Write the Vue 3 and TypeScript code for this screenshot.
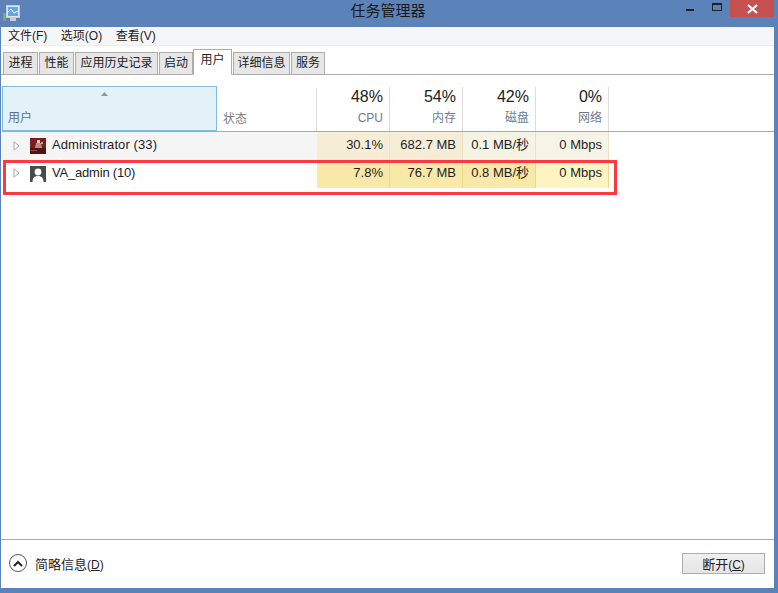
<script setup lang="ts">
const menus = ['文件(F)', '选项(O)', '查看(V)']
const tabs = [
  { label: '进程', w: 35 },
  { label: '性能', w: 35 },
  { label: '应用历史记录', w: 83 },
  { label: '启动', w: 34 },
  { label: '用户', w: 39, active: true },
  { label: '详细信息', w: 57 },
  { label: '服务', w: 34 }
]
const heads = [
  { pct: '48%', name: 'CPU' },
  { pct: '54%', name: '内存' },
  { pct: '42%', name: '磁盘' },
  { pct: '0%', name: '网络' }
]
const rows = [
  {
    name: 'Administrator (33)',
    kind: 'admin',
    cells: [
      { v: '30.1%', c: '#f6edd6' },
      { v: '682.7 MB', c: '#f6edd6' },
      { v: '0.1 MB/秒', c: '#f5f3e4' },
      { v: '0 Mbps', c: '#f6f4e6' }
    ]
  },
  {
    name: 'VA_admin (10)',
    kind: 'user',
    cells: [
      { v: '7.8%', c: '#f9e9a8' },
      { v: '76.7 MB', c: '#f9e9a8' },
      { v: '0.8 MB/秒', c: '#f9e9a8' },
      { v: '0 Mbps', c: '#fdf3c3' }
    ]
  }
]
</script>

<template>
  <div class="window">
    <header class="titlebar">
      <svg class="appicon" width="17" height="17" viewBox="0 0 17 17">
        <rect x="0" y="8" width="3" height="8" fill="#8a9a8c" />
        <rect x="1" y="10" width="1" height="2" fill="#6fbf5a" />
        <rect x="3.500" y="0.500" width="13" height="12" fill="#dfe4ea" stroke="#c3ccd4" />
        <rect x="5" y="2" width="10" height="9" fill="#5fa7e8" />
        <path d="M5 7l3-3 3 4 4-2" fill="none" stroke="#fff" stroke-width="1" />
        <rect x="7" y="13" width="6" height="3" fill="#c8ccd0" />
      </svg>
      <span class="title">任务管理器</span>
      <div class="controls">
        <span class="min"></span>
        <span class="max"></span>
        <span class="close">
          <svg width="13" height="10" viewBox="0 0 13 10"><path d="M2 1l9 8M11 1l-9 8" stroke="#fff" stroke-width="2.2" fill="none" /></svg>
        </span>
      </div>
    </header>

    <main class="client">
      <nav class="menubar">
        <span v-for="m in menus" :key="m" class="menu">{{ m }}</span>
      </nav>

      <div class="tabs">
        <span
          v-for="t in tabs"
          :key="t.label"
          class="tab"
          :class="{ active: t.active }"
          :style="{ width: t.w + 'px' }"
        >{{ t.label }}</span>
      </div>

      <section class="table">
        <div class="thead">
          <div class="th-user">
            <svg class="sort" width="7" height="4" viewBox="0 0 7 4"><path d="M3.500 0L7 4H0z" fill="#7f9db5" /></svg>
            <span>用户</span>
          </div>
          <div class="th-status">状态</div>
          <div v-for="h in heads" :key="h.name" class="th-num">
            <span class="pct">{{ h.pct }}</span>
            <span class="cname">{{ h.name }}</span>
          </div>
        </div>

        <div class="tbody">
          <div v-for="r in rows" :key="r.name" class="row" :class="r.kind">
            <div class="namecell">
              <svg class="arrow" width="7" height="10" viewBox="0 0 7 10"><path d="M1 .8L6 5 1 9.2z" fill="#fff" stroke="#a6a6a6" /></svg>
              <svg v-if="r.kind === 'admin'" class="avatar" width="16" height="16" viewBox="0 0 16 16">
                <rect width="16" height="16" fill="#7a1f1c" />
                <rect y="10" width="16" height="6" fill="#521412" />
                <path d="M6 5h5l1 5H5z" fill="#b98c86" />
                <rect x="7" y="2" width="3" height="3" fill="#e2c8c0" />
                <rect x="11" y="4" width="2" height="2" fill="#c9a09a" />
                <rect x="1" y="12" width="6" height="1" fill="#a04a40" />
              </svg>
              <svg v-else class="avatar" width="16" height="16" viewBox="0 0 16 16">
                <rect width="16" height="16" fill="#4a4a4a" />
                <circle cx="8" cy="6" r="3.400" fill="#fff" />
                <path d="M2.500 16c0-4 2-6 5.500-6s5.500 2 5.500 6z" fill="#fff" />
              </svg>
              <span class="uname">{{ r.name }}</span>
            </div>
            <div class="statuscell"></div>
            <div
              v-for="c in r.cells"
              :key="c.v"
              class="numcell"
              :style="{ background: c.c }"
            >{{ c.v }}</div>
          </div>
          <div class="highlight"></div>
        </div>
      </section>

      <footer class="footer">
        <div class="fewer">
          <span class="chev">
            <svg width="10" height="7" viewBox="0 0 10 7"><path d="M1 6l4-4 4 4" fill="none" stroke="#222" stroke-width="2" /></svg>
          </span>
          <span class="fewer-text">简略信息<span class="key">(<u>D</u>)</span></span>
        </div>
        <button class="end" type="button">断开<span class="key">(<u>C</u>)</span></button>
      </footer>
    </main>
  </div>
</template>

<style>
html, body { margin: 0; padding: 0; background: #5b82b9; }
</style>

<style scoped>
.window {
  width: 778px;
  height: 593px;
  background: #5b82b9;
  display: flex;
  flex-direction: column;
  font-family: "Liberation Sans", "Noto Sans CJK SC", sans-serif;
  font-size: 12px;
  color: #1e1e1e;
  overflow: hidden;
}
.titlebar {
  height: 27px;
  flex: none;
  display: flex;
  align-items: flex-start;
  position: relative;
}
.appicon { margin: 5px 0 0 3px; }
.title {
  position: absolute;
  left: -2px;
  right: 0;
  top: 1px;
  text-align: center;
  font-size: 15px;
  line-height: 20px;
  color: #1a1a1a;
}
.controls {
  margin-left: auto;
  display: flex;
  align-items: flex-start;
  position: relative;
  z-index: 1;
}
.min {
  width: 8px;
  height: 2px;
  background: #222;
  margin: 9px 18px 0 0;
}
.max {
  width: 8px;
  height: 5px;
  border: 1px solid #222;
  border-top-width: 2px;
  margin: 3px 8px 0 0;
}
.close {
  width: 44px;
  height: 17px;
  background: #c75050;
  margin-right: 4px;
  display: flex;
  align-items: center;
  justify-content: center;
}
.client {
  flex: none;
  width: 773px;
  height: 561px;
  margin-left: 1px;
  background: #fff;
  display: flex;
  flex-direction: column;
}
.menubar {
  height: 18px;
  flex: none;
  background: #f5f6f7;
  border-bottom: 1px solid #ececec;
  display: flex;
  align-items: center;
  padding-left: 7px;
  gap: 13.5px;
  line-height: 18px;
}
.tabs {
  height: 29px;
  flex: none;
  display: flex;
  align-items: flex-end;
  padding-left: 2px;
  gap: 1px;
  border-bottom: 1px solid #acacac;
  box-sizing: border-box;
}
.tab {
  box-sizing: border-box;
  height: 23px;
  margin-bottom: -1px;
  background: #e6e6e6;
  border: 1px solid #acacac;
  text-align: center;
  line-height: 20px;
  color: #222;
}
.tab.active {
  height: 26px;
  background: #fff;
  border-bottom-color: #fff;
  line-height: 21px;
  margin-left: -1px;
  position: relative;
}
.table {
  flex: 1;
  display: flex;
  flex-direction: column;
  padding-top: 11px;
}
.thead {
  display: flex;
  height: 46px;
  flex: none;
  border-bottom: 1px solid #a9a9a9;
  box-sizing: border-box;
  margin-left: 1px;
}
.th-user {
  box-sizing: border-box;
  width: 215px;
  background: #e3f2f9;
  border: 1px solid #7dbde6;
  position: relative;
  padding: 0 0 5px 5px;
  display: flex;
  align-items: flex-end;
  color: #5f6f7b;
  height: 45px;
}
.sort {
  position: absolute;
  left: 98px;
  top: 5px;
}
.th-status {
  box-sizing: border-box;
  width: 100px;
  padding: 0 0 5px 6px;
  margin-top: 2px;
  display: flex;
  align-items: flex-end;
  color: #7a7a7a;
  border-right: 1px solid #dcdcdc;
}
.th-num {
  box-sizing: border-box;
  width: 73px;
  margin-top: 1px;
  border-right: 1px solid #dcdcdc;
  padding-right: 6px;
  display: flex;
  flex-direction: column;
  align-items: flex-end;
}
.pct {
  font-size: 16px;
  line-height: 19px;
  color: #222;
}
.cname {
  color: #6d7d8b;
  line-height: 16px;
  margin-top: 4px;
}
.tbody {
  position: relative;
  flex: 1;
}
.row {
  display: flex;
  height: 28px;
  margin-left: 1px;
}
.namecell {
  width: 215px;
  flex: none;
  display: flex;
  align-items: center;
  padding-left: 11px;
  box-sizing: border-box;
}
.row.admin .namecell,
.row.admin .statuscell { background: #f5f5f5; }
.arrow { margin-right: 10px; }
.row.user .arrow { margin-top: -2px; }
.avatar { margin-right: 6px; }
.uname {
  font-size: 13px;
  color: #1e1e1e;
  letter-spacing: 0.1px;
  margin-top: -3px;
}
.row.user .uname {
  margin-top: -4px;
  letter-spacing: -0.2px;
}
.statuscell { width: 100px; flex: none; }
.numcell {
  box-sizing: border-box;
  width: 73px;
  flex: none;
  text-align: right;
  padding-right: 6px;
  line-height: 25px;
  font-size: 13px;
  border-right: 1px solid #ebe2c3;
}
.row.user .numcell { border-right-color: #ecd88f; }
.highlight {
  position: absolute;
  left: 2px;
  top: 28px;
  width: 614px;
  height: 35px;
  box-sizing: border-box;
  border: 3px solid #fb3a3e;
  pointer-events: none;
}
.footer {
  height: 49px;
  flex: none;
  border-top: 1px solid #acacac;
  box-sizing: border-box;
  display: flex;
  align-items: center;
  justify-content: space-between;
  padding: 0 9px 2px 8px;
}
.fewer { display: flex; align-items: center; gap: 8px; }
.chev {
  box-sizing: border-box;
  width: 18px;
  height: 18px;
  border: 1px solid #555;
  border-radius: 50%;
  display: flex;
  align-items: center;
  justify-content: center;
}
.fewer-text { color: #1e1e1e; font-size: 13px; }
.key { font-size: 12px; }
.end {
  width: 83px;
  height: 21px;
  padding: 0;
  font: inherit;
  font-size: 13px;
  color: #1e1e1e;
  background: linear-gradient(#f0f0f0, #e5e5e5);
  border: 1px solid #acacac;
}
</style>
